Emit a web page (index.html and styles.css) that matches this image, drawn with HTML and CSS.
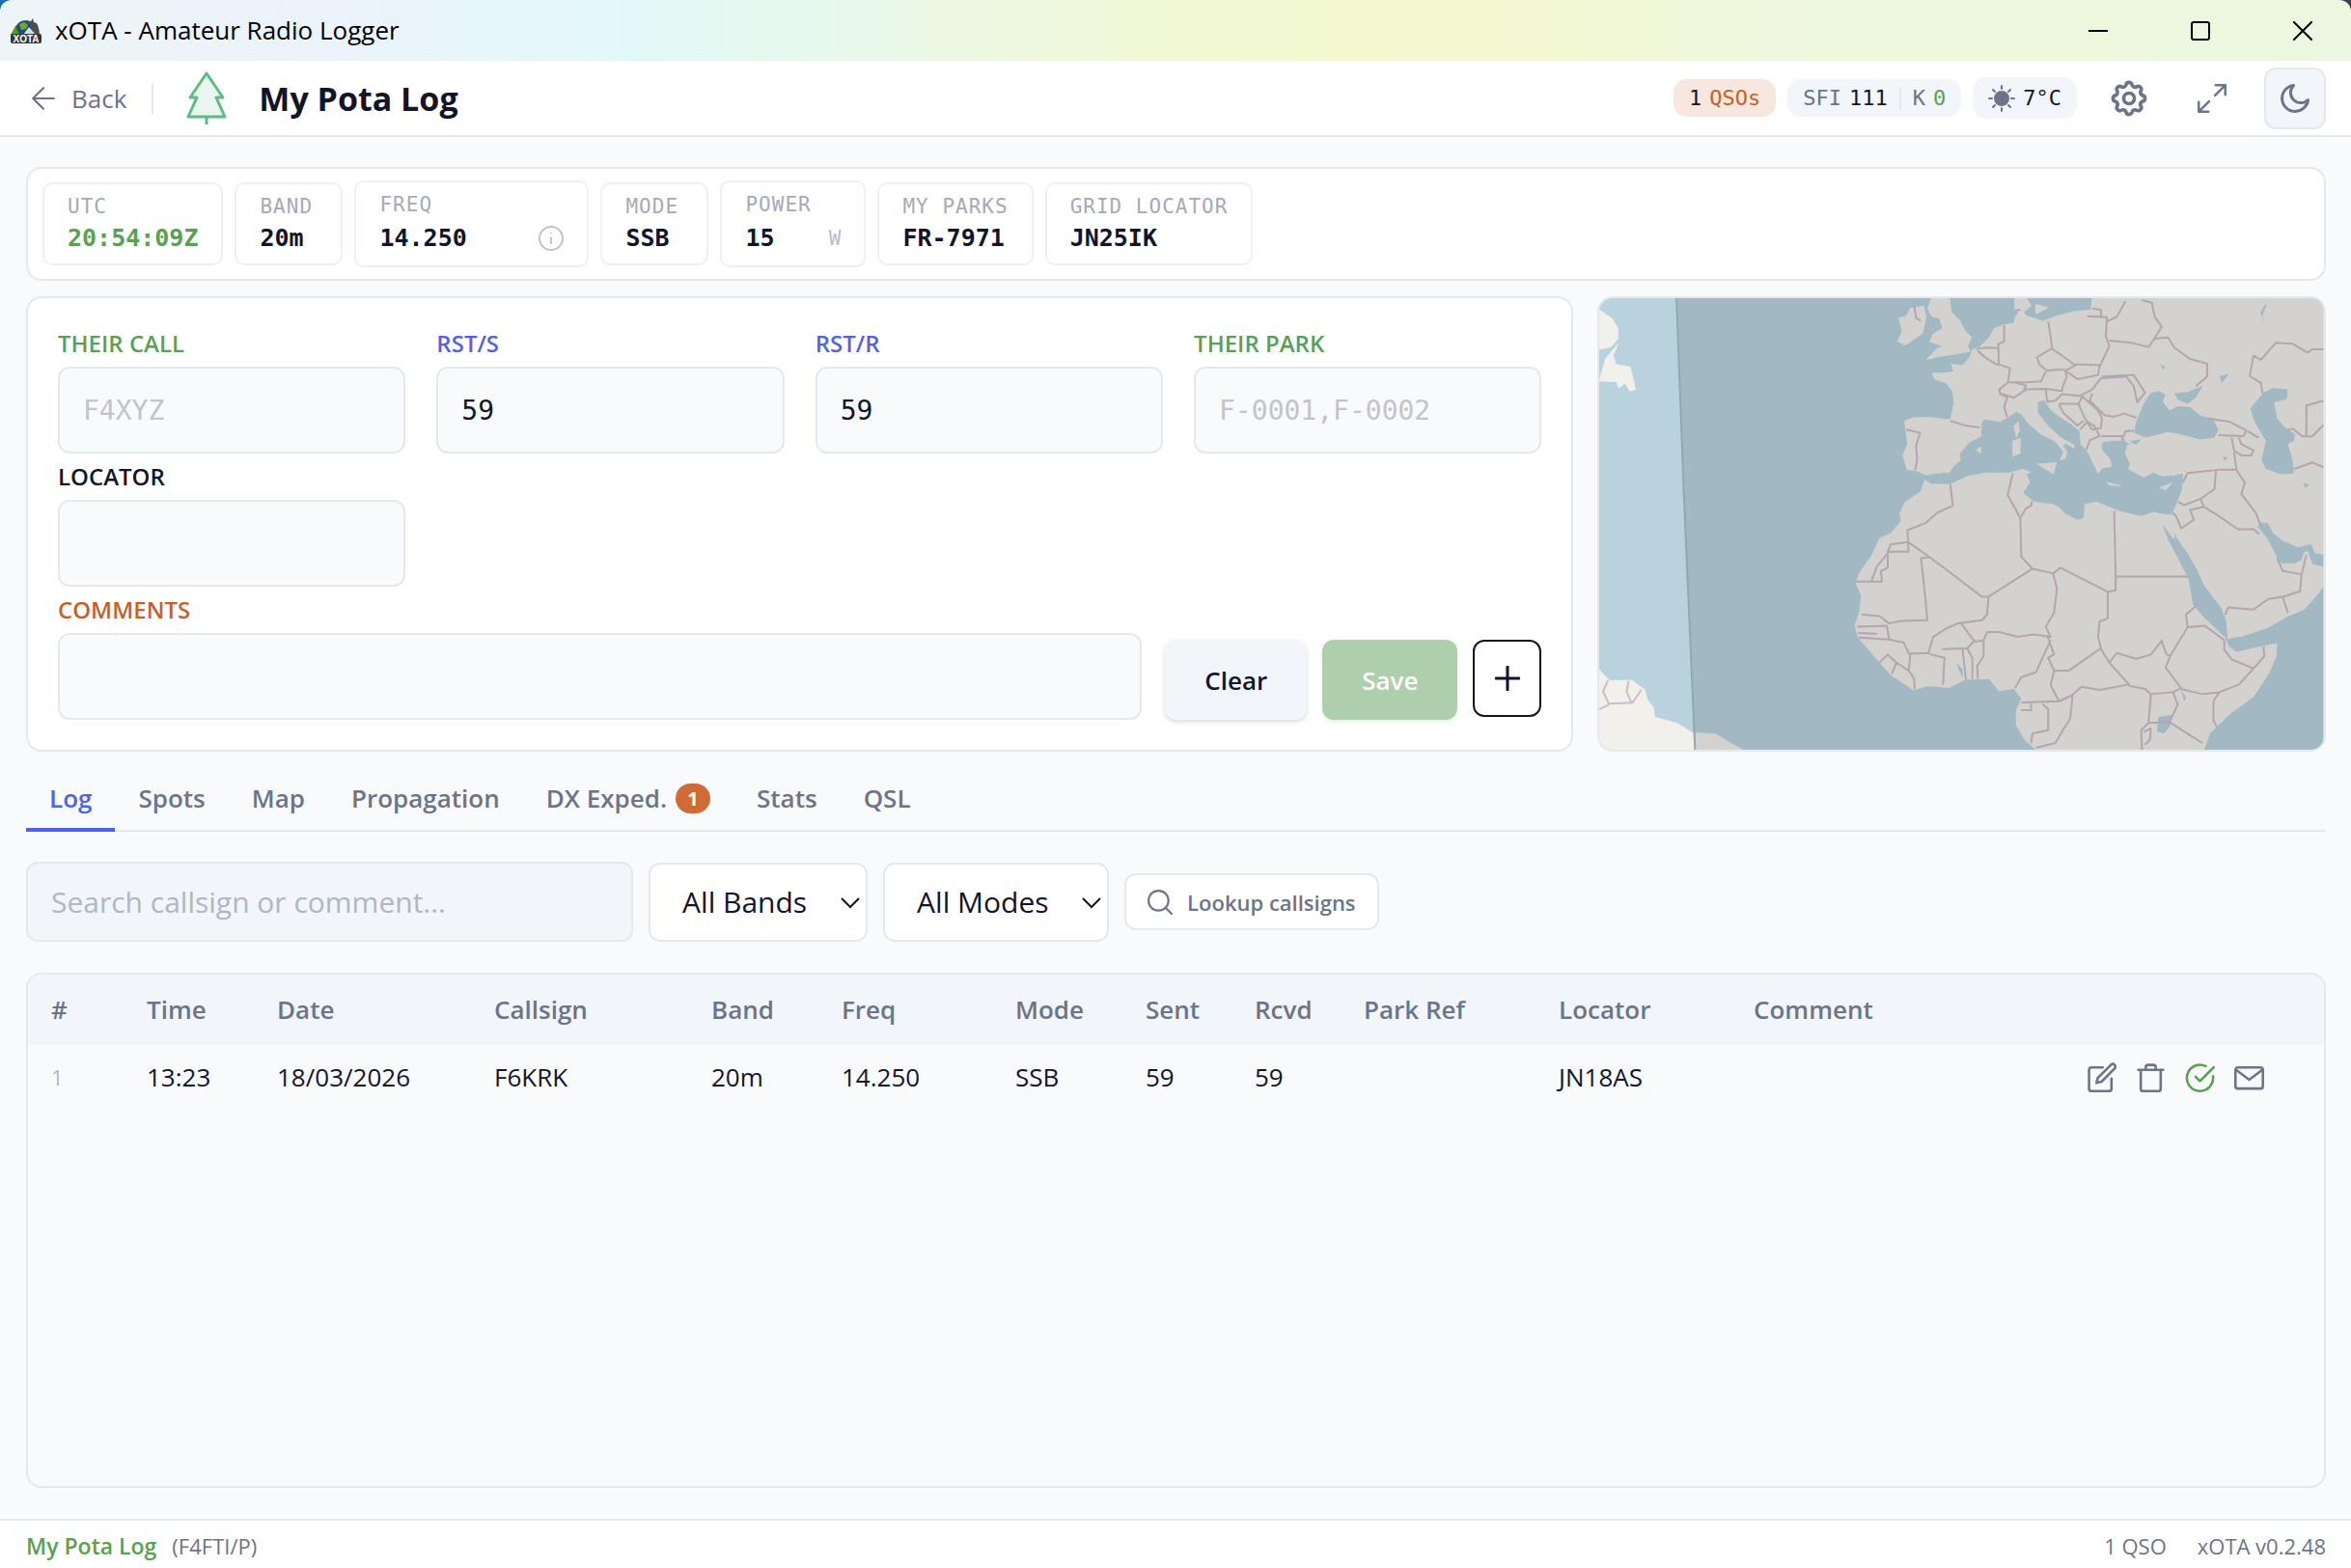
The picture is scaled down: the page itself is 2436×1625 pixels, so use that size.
FILE: index.html
```html
<!DOCTYPE html>
<html lang="en">
<head>
    <meta charset="UTF-8">
    <meta name="viewport" content="width=device-width, initial-scale=1.0">
    <title>xOTA - Amateur Radio Logger</title>
    <link rel="stylesheet" href="styles.css">
</head>
<body>

    <div class="titlebar">
        <svg class="app-logo" viewBox="0 0 34 28">
            <path d="M4 18C4 9 10 3 17 3l5 1 2-3 1 4 3 1c2 4 3 8 3 13H4z" fill="#4b4f52"/>
            <circle cx="15" cy="11" r="7" fill="#1d4f7c"/>
            <path d="M10 7l5-2 4 3-2 4-5 1z" fill="#6fa832"/>
            <path d="M1 18l5-9 4 9z" fill="#4f9a1f"/>
            <path d="M14 18l6-8 7 8z" fill="#d8dcdc"/>
            <rect x="1" y="17" width="32" height="10" rx="2" fill="#33373a"/>
            <text class="logo-text" x="17" y="26" text-anchor="middle">XOTA</text>
        </svg>
        <span class="window-title">xOTA - Amateur Radio Logger</span>
        <div class="window-controls">
            <button type="button" aria-label="Minimize"><svg viewBox="0 0 20 20"><path d="M0 10h20"/></svg></button>
            <button type="button" aria-label="Maximize"><svg viewBox="0 0 20 20"><rect x="1" y="1" width="18" height="18" rx="2"/></svg></button>
            <button type="button" aria-label="Close"><svg viewBox="0 0 20 20"><path d="M0 0l20 20M20 0L0 20"/></svg></button>
        </div>
    </div>

    <header class="header">
        <a class="back" href="#">
            <svg class="icon" viewBox="0 0 24 24"><path d="M22 12H2M12 2L2 12l10 10"/></svg>
            Back
        </a>
        <span class="divider"></span>
        <svg class="tree" viewBox="0 0 42 56"><path d="M21 2L4 27h7L2 47h38L31 27h7z"/><path d="M21 47v8"/></svg>
        <h1>My Pota Log</h1>
        <div class="header-right">
            <div class="pill pill-qso"><b>1</b> <span>QSOs</span></div>
            <div class="pill">
                <span>SFI</span> <b>111</b>
                <i class="pill-sep"></i>
                <span>K</span> <b class="green">0</b>
            </div>
            <div class="pill pill-weather">
                <svg class="sun" viewBox="0 0 28 28">
                    <circle cx="14" cy="14" r="7"/>
                    <path d="M14 1v3M14 24v3M1 14h3M24 14h3M5 5l2 2M21 21l2 2M5 23l2-2M21 7l2-2"/>
                </svg>
                <b>7°C</b>
            </div>
            <button type="button" class="icon-btn" aria-label="Settings">
                <svg class="icon icon-lg" viewBox="0 0 24 24"><circle cx="12" cy="12" r="3"/><path d="M10.3 4.3c.4-1.8 2.9-1.8 3.4 0a1.7 1.7 0 0 0 2.6 1.1c1.5-1 3.3.8 2.4 2.4a1.7 1.7 0 0 0 1 2.5c1.8.5 1.8 2.9 0 3.4a1.7 1.7 0 0 0-1 2.6c.9 1.5-.9 3.3-2.4 2.4a1.7 1.7 0 0 0-2.6 1c-.5 1.8-3 1.8-3.4 0a1.7 1.7 0 0 0-2.6-1c-1.5.9-3.3-.9-2.4-2.4a1.7 1.7 0 0 0-1-2.6c-1.8-.5-1.8-2.9 0-3.4a1.7 1.7 0 0 0 1-2.5c-.9-1.6.9-3.4 2.4-2.4 1 .6 2.3 0 2.6-1.1z"/></svg>
            </button>
            <button type="button" class="icon-btn" aria-label="Full screen">
                <svg class="icon icon-md" viewBox="0 0 24 24"><path d="M15 1h8v8M22.5 1.5l-8 8M9 23H1v-8M1.5 22.5l8-8"/></svg>
            </button>
            <button type="button" class="icon-btn theme-btn" aria-label="Dark mode">
                <svg class="icon" viewBox="0 0 24 24"><path d="M21 13A9 9 0 1 1 11 3a7 7 0 0 0 10 10z"/></svg>
            </button>
        </div>
    </header>

    <main>
        <section class="card status">
            <div class="stat"><span class="stat-label">UTC</span><span class="stat-value green">20:54:09Z</span></div>
            <div class="stat"><span class="stat-label">BAND</span><span class="stat-value">20m</span></div>
            <div class="stat stat-freq">
                <label class="stat-label" for="freq">FREQ</label>
                <div class="stat-row">
                    <input class="stat-value" type="text" id="freq" value="14.250">
                    <svg class="info" viewBox="0 0 26 26"><circle cx="13" cy="13" r="12"/><path d="M13 12v7M13 7v1"/></svg>
                </div>
            </div>
            <div class="stat"><span class="stat-label">MODE</span><span class="stat-value">SSB</span></div>
            <div class="stat stat-power">
                <label class="stat-label" for="power">POWER</label>
                <div class="stat-row">
                    <input class="stat-value" type="text" id="power" value="15">
                    <span class="unit">W</span>
                </div>
            </div>
            <div class="stat"><span class="stat-label">MY PARKS</span><span class="stat-value">FR-7971</span></div>
            <div class="stat"><span class="stat-label">GRID LOCATOR</span><span class="stat-value">JN25IK</span></div>
        </section>

        <div class="entry">
            <form class="card qso-form">
                <div class="field">
                    <label class="green" for="call">THEIR CALL</label>
                    <input type="text" id="call" placeholder="F4XYZ">
                </div>
                <div class="field">
                    <label class="blue" for="rsts">RST/S</label>
                    <input type="text" id="rsts" value="59">
                </div>
                <div class="field">
                    <label class="blue" for="rstr">RST/R</label>
                    <input type="text" id="rstr" value="59">
                </div>
                <div class="field">
                    <label class="green" for="park">THEIR PARK</label>
                    <input type="text" id="park" placeholder="F-0001,F-0002">
                </div>
                <div class="field">
                    <label for="locator">LOCATOR</label>
                    <input type="text" id="locator">
                </div>
                <div class="comment-row">
                    <div class="field">
                        <label class="orange" for="comments">COMMENTS</label>
                        <input type="text" id="comments">
                    </div>
                    <div class="form-buttons">
                        <button type="reset" class="btn btn-clear">Clear</button>
                        <button type="submit" class="btn btn-save">Save</button>
                        <button type="button" class="btn-plus" aria-label="Add"><svg viewBox="0 0 26 26"><path d="M13 1v24M1 13h24"/></svg></button>
                    </div>
                </div>
            </form>

            <div class="card map">
                <svg viewBox="32 56 1481 1405" preserveAspectRatio="none" role="img" aria-label="Map">
                    <rect class="sea" x="32" y="56" width="1481" height="1405"/>
                    <g class="land">
                        <path d="M882 56L882 90 890 102 884 112 880 135 862 138 840 150 830 178 812 207 795 217 790 240 775 266 752 260 757 286 735 288 713 290 718 308 742 320 755 345 758 380 751 432 735 432 710 427 675 428 657 438 659 465 663 510 653 545 662 590 680 592 700 606 715 602 748 597 755 580 770 560 768 540 788 505 812 485 812 450 818 432 850 440 868 425 885 408 897 418 908 443 935 478 965 502 982 533 975 560 986 552 988 533 979 515 986 508 1003 522 1002 512 975 490 950 455 928 412 928 380 942 370 955 402 975 425 1000 450 1015 470 1017 510 1030 530 1042 568 1052 600 1060 585 1080 580 1075 555 1060 530 1058 505 1082 498 1105 497 1115 508 1140 500 1150 490 1140 500 1112 515 1108 540 1118 570 1115 588 1145 612 1165 598 1185 610 1210 606 1227 600 1225 650 1212 700 1204 728 1190 730 1165 722 1140 735 1110 725 1088 714 1068 702 1048 690 1025 698 1024 738 1012 748 985 728 972 708 960 698 920 690 898 662 912 628 905 605 914 597 897 588 870 600 820 600 785 610 750 636 710 634 698 622 690 658 658 690 647 725 650 750 628 788 606 803 588 860 565 910 557 942 568 980 565 1030 555 1075 562 1112 585 1152 605 1188 630 1230 675 1275 705 1262 747 1268 780 1242 830 1240 850 1278 880 1270 896 1302 885 1340 885 1385 903 1430 925 1461 1268 1461 1280 1410 1320 1350 1370 1295 1400 1225 1416 1170 1417 1130 1370 1145 1335 1158 1320 1142 1310 1110 1285 1075 1268 1050 1245 1010 1236 930 1216 870 1195 810 1180 752 1207 804 1210 775 1213 800 1236 850 1255 900 1270 950 1305 1020 1315 1060 1318 1114 1345 1108 1400 1080 1440 1045 1472 1025 1502 975 1513 950 1513 892 1490 885 1480 845 1475 845 1468 872 1455 882 1428 882 1418 868 1410 840 1395 800 1378 768 1380 752 1400 755 1410 785 1430 810 1460 830 1488 820 1497 850 1513 852 1513 56 1040 56 1038 92 1000 98 960 115 940 128 920 118 905 112 900 98 915 80 905 56z"/>
                        <path d="M668 88L695 80 700 115 693 165 658 202 642 190 652 160 645 118 660 112z"/>
                        <path d="M712 56L748 56 752 100 770 128 780 158 793 178 785 205 790 222 760 230 725 238 702 247 722 214 735 205 708 192 715 168 735 150 728 118 712 112 704 88z"/>
                        <path d="M880 455L889 440 891 468 885 488zM878 500L893 492 892 540 878 547zM928 572L967 567 960 602zM1070 628L1100 640 1075 638zM1178 645L1202 632 1190 652zM803 528L812 520 812 538zM925 75L950 85 925 105z"/>
                        <path d="M32 92L58 120 70 150 70 182 55 208 32 215z"/>
                        <path d="M70 200L60 235 66 262 95 270 100 300 106 340 95 345 85 320 72 335 68 316 32 315 45 245z"/>
                        <path d="M32 1212L52 1245 98 1245 125 1275 130 1305 143 1330 145 1360 190 1378 222 1408 270 1412 300 1440 325 1461 32 1461z"/>
                    </g>
                    <g class="sea">
                        <path d="M1160 350L1178 345 1190 358 1184 378 1198 405 1215 392 1240 395 1260 420 1288 435 1298 465 1290 490 1260 496 1228 482 1195 472 1150 490 1125 475 1130 440 1145 385z"/>
                        <path d="M1208 352L1235 348 1267 328 1252 365 1235 385 1215 372z"/>
                        <path d="M1390 350L1410 335 1440 340 1438 370 1412 380 1418 430 1435 460 1455 480 1452 500 1440 510 1450 560 1452 602 1425 604 1395 587 1386 560 1395 500 1372 440 1363 400z"/>
                        <path d="M1115 500L1140 496 1130 512zM1175 1360L1203 1352 1200 1385 1188 1410 1172 1405zM1300 300L1320 290 1305 320zM1384 100L1392 80 1398 72 1388 110 1393 140zM1180 262L1190 270 1184 278z"/>
                        <path d="M1472 630L1485 638 1475 645zM1306 550L1318 550 1312 562zM1222 1275L1232 1300 1228 1310zM762 1190L775 1210 776 1240 768 1215z"/>
                    </g>
                    <g class="borders">
                        <path d="M882 95L893 92M676 80L680 118 690 126M860 140L860 190 848 200 849 262 872 274 868 318 850 340 852 355 866 365 860 395 866 425M803 214L825 210 848 212M806 220L825 245 848 264M950 128L955 175 958 212 927 240 932 262 948 282 968 278 988 280 1005 265 983 240 958 214M868 318L905 318 935 315 945 285M852 352L880 366 905 340 945 338 978 345 980 330 988 300 985 283M880 318L905 328 900 340M945 338L948 378 965 375 978 355 1015 360 1040 340 1058 305 1110 300 1125 330 1132 380 1148 350 1125 295 1060 300M988 285L1010 308 1052 295 1055 265 1005 262M1055 270L1075 205 1068 175 1070 115 1030 112M1040 88L1058 92 1058 112M1070 128L1090 115 1108 66M1142 62L1162 70 1168 115 1182 145 1168 180 1155 208 1120 195 1075 188M1168 182L1195 178 1208 210 1240 245 1275 260 1275 300 1252 330M972 385L1012 385 1020 362 1052 405 1060 430 1058 460 1040 465 1025 430 1012 385M972 388L982 415 1010 452 1022 438M1015 465L1030 440 1045 455 1055 485 1035 498 1028 528M1058 485L1105 485 1108 470 1125 468M1040 352L1035 375 1065 420 1085 425 1105 415 1130 428M1100 488L1105 500M750 438L780 452 810 458M660 465L688 475 680 515 682 560 678 590"/>
                        <path d="M1275 430L1320 440 1355 468 1350 485 1298 482M1358 470L1380 490M1325 490L1330 530 1345 545 1365 545 1370 530 1345 510 1340 490M1330 535L1335 590 1300 590 1235 600 1225 630M1335 590L1352 630 1345 665 1375 725 1382 755M1293 595L1290 650 1262 680 1228 700 1215 690M1262 682L1268 705 1240 715 1248 745 1222 772 1212 735 1205 725M1268 705L1300 735 1338 775 1370 775 1382 790M1388 352L1385 320 1362 298 1370 235 1385 248 1415 195 1450 198 1480 225 1490 215 1513 215M1478 486L1478 390 1513 375M1435 468L1450 462 1470 486 1490 486 1513 450M1452 588L1490 567 1513 582M1418 865L1430 905 1468 915 1478 855M1468 915L1465 968 1430 985 1400 992 1370 1025 1318 1018 1312 1042M1430 988L1440 1035"/>
                        <path d="M750 636L755 702 725 722 700 755 662 778 664 815 628 822 622 845 664 845 664 815M622 845L622 895 608 905 610 938 557 938M622 850L600 890 588 938M664 815L708 862 815 985 828 985 918 898 895 860 893 740 867 668 878 600M893 740L905 710 916 700 916 688M918 898L960 912 975 895 1072 970 1088 965 1088 922 1236 922M1088 922L1085 718M708 862L690 865 698 975 703 1058 650 1060 625 1068 605 1045 568 1040M828 985L825 1040 815 1058 765 1068 740 1085 715 1110 705 1160 665 1162 655 1128 625 1118 620 1075 560 1078M960 912L968 960 962 1035 945 1078 955 1110 920 1102 888 1110 850 1095 825 1095 818 1120 800 1125 772 1068M1072 970L1072 1052 1055 1062 1052 1110 1058 1145 1020 1185 992 1215 962 1215 950 1175 962 1165 948 1105M562 1098L600 1100M562 1112L625 1118M605 1190L622 1165 640 1190 665 1215 668 1165M640 1190L630 1225M665 1215L676 1240 677 1272M705 1162L738 1175 735 1260M733 1148L785 1145 800 1120M775 1148L782 1245M785 1148L795 1175 795 1240M818 1122L818 1170 805 1200 806 1240M955 1120L925 1220 895 1235 882 1270M962 1215L955 1260 972 1310 895 1314M1058 1148L1075 1190 1115 1258 1055 1275 1018 1265 1000 1290 975 1310M972 1310L1000 1290 995 1365 980 1400 965 1440 925 1455M895 1338L915 1338 915 1318M938 1318L950 1335 950 1400 918 1410 915 1440M1075 1190L1090 1160 1130 1178 1160 1165 1182 1122 1192 1165 1200 1168 1190 1205 1222 1270 1205 1282 1160 1288 1148 1272 1115 1262M1200 1168L1235 1080 1232 1040 1255 1010M1235 1080L1270 1075 1310 1120 1310 1150 1325 1180 1370 1208 1392 1170 1390 1140M1370 1208L1340 1258 1300 1282 1265 1288 1222 1272M1300 1282L1288 1310 1288 1370 1295 1390M1205 1282L1215 1320 1198 1375 1265 1440M1200 1375L1155 1378 1160 1288M1155 1378L1140 1400 1142 1461M1145 1405L1160 1395 1158 1430 1148 1445M50 1245L40 1280 52 1318 100 1315 118 1275M92 1248L88 1280 98 1315M32 1335L52 1320"/>
                    </g>
                    <path class="night" d="M190 56L205 660 228 1461H1513V56z"/>
                    <path class="terminator" d="M190 56L205 660 228 1461"/>
                </svg>
            </div>
        </div>

        <nav class="tabs">
            <a class="tab active" href="#">Log</a>
            <a class="tab" href="#">Spots</a>
            <a class="tab" href="#">Map</a>
            <a class="tab" href="#">Propagation</a>
            <a class="tab" href="#">DX Exped. <span class="badge">1</span></a>
            <a class="tab" href="#">Stats</a>
            <a class="tab" href="#">QSL</a>
        </nav>

        <div class="filters">
            <input class="search" type="text" aria-label="Search" placeholder="Search callsign or comment...">
            <div class="select">
                <select aria-label="Band"><option>All Bands</option></select>
                <svg viewBox="0 0 20 12"><path d="M1 1l9 9 9-9"/></svg>
            </div>
            <div class="select">
                <select aria-label="Mode"><option>All Modes</option></select>
                <svg viewBox="0 0 20 12"><path d="M1 1l9 9 9-9"/></svg>
            </div>
            <button type="button" class="lookup">
                <svg class="icon" viewBox="0 0 24 24"><circle cx="10.5" cy="10.5" r="9.5"/><path d="M17.5 17.5L23 23"/></svg>
                Lookup callsigns
            </button>
        </div>

        <section class="log">
            <table>
                <colgroup>
                    <col class="w-num"><col class="w-sm"><col class="w-lg"><col class="w-lg"><col class="w-sm"><col class="w-freq">
                    <col class="w-sm"><col class="w-rst"><col class="w-rst"><col class="w-md"><col class="w-md"><col><col class="w-actions">
                </colgroup>
                <thead>
                    <tr>
                        <th>#</th><th>Time</th><th>Date</th><th>Callsign</th><th>Band</th><th>Freq</th><th>Mode</th>
                        <th>Sent</th><th>Rcvd</th><th>Park Ref</th><th>Locator</th><th>Comment</th><th></th>
                    </tr>
                </thead>
                <tbody>
                    <tr>
                        <td class="num">1</td><td>13:23</td><td>18/03/2026</td><td>F6KRK</td><td>20m</td><td>14.250</td><td>SSB</td>
                        <td>59</td><td>59</td><td></td><td>JN18AS</td><td></td>
                        <td>
                            <div class="actions">
                                <button type="button" aria-label="Edit"><svg class="icon" viewBox="0 0 24 24"><path d="M13 4H4a2 2 0 0 0-2 2v15a2 2 0 0 0 2 2h14a2 2 0 0 0 2-2v-8"/><path d="M19.5 2a2.1 2.1 0 0 1 3 3L12 15.5l-4 1 1-4z"/></svg></button>
                                <button type="button" aria-label="Delete"><svg class="icon" viewBox="0 0 24 24"><path d="M2 6h20M4 6v15a2 2 0 0 0 2 2h12a2 2 0 0 0 2-2V6M8 6V4a2 2 0 0 1 2-2h4a2 2 0 0 1 2 2v2"/></svg></button>
                                <button type="button" class="green" aria-label="Confirmed"><svg class="icon" viewBox="0 0 24 24"><path d="M22.5 11v1.5A10.5 10.5 0 1 1 16.5 3"/><path d="M23 4L12 15l-3.5-3.5"/></svg></button>
                                <button type="button" aria-label="Mail"><svg class="icon" viewBox="0 0 24 24"><rect x="1" y="4" width="22" height="17" rx="2"/><path d="M1.5 6L12 14l10.5-8"/></svg></button>
                            </div>
                        </td>
                    </tr>
                </tbody>
            </table>
        </section>
    </main>

    <footer class="footer">
        <strong>My Pota Log</strong>
        <span>(F4FTI/P)</span>
        <div class="footer-right">
            <span>1 QSO</span>
            <span>xOTA v0.2.48</span>
        </div>
    </footer>
</body>
</html>
```
FILE: styles.css
```css
* {
    box-sizing: border-box;
}
body {
    font-family: "Open Sans", "Noto Sans", sans-serif;
    font-size: 26px;
    margin: 0;
    min-height: 100vh;
    display: flex;
    flex-direction: column;
    background: linear-gradient(90deg, #1f6fa8, #3b4352);
    color: #12152a;
}
button, input, select {
    font-family: inherit;
    font-size: inherit;
    color: inherit;
    margin: 0;
}
button {
    cursor: pointer;
    padding: 0;
    border: none;
    background: none;
}
svg {
    display: block;
    flex: none;
}
.green {
    color: #5aa052;
}
.blue {
    color: #4f63e6;
}
.orange {
    color: #c95f28;
}
.icon {
    width: 26px;
    height: 26px;
    fill: none;
    stroke: currentColor;
    stroke-width: 2;
    stroke-linecap: round;
    stroke-linejoin: round;
}

/* window title bar */
.titlebar {
    display: flex;
    align-items: center;
    height: 63px;
    padding-left: 10px;
    border-radius: 12px 12px 0 0;
    background: linear-gradient(90deg, #eef5f7 0%, #ebf3fb 14%, #e2f8f8 27%, #e7f8ec 35%, #f2f8d5 50%, #f3f8cf 57%, #f3f8d3 66%, #eef7dd 75%, #ebf7e0 100%);
}
.app-logo {
    width: 34px;
    height: 28px;
}
.logo-text {
    font: bold 10px "Liberation Sans", sans-serif;
    fill: #fff;
}
.window-title {
    margin-left: 13px;
    font-size: 26px;
    line-height: 34px;
    padding-bottom: 2px;
    color: #000;
}
.window-controls {
    display: flex;
    gap: 6px;
    margin-left: auto;
}
.window-controls button {
    width: 100px;
    height: 60px;
    display: flex;
    align-items: center;
    justify-content: center;
}
.window-controls svg {
    width: 20px;
    height: 20px;
    fill: none;
    stroke: #000;
    stroke-width: 2;
}

/* header */
.header {
    display: flex;
    align-items: center;
    height: 79px;
    padding: 0 26px 0 32px;
    background: #fff;
    border-bottom: 2px solid #e4e8ef;
}
.back {
    display: flex;
    align-items: center;
    gap: 16px;
    color: #6b7489;
    text-decoration: none;
}
.divider {
    width: 2px;
    height: 32px;
    margin: 0 34px 0 26px;
    background: #e4e8ef;
}
.tree {
    width: 42px;
    height: 56px;
    fill: #e9f5ee;
    stroke: #5fba84;
    stroke-width: 3;
    stroke-linejoin: round;
}
h1 {
    margin: 0 0 0 33px;
    font-size: 34px;
    font-weight: 700;
}
.header-right {
    display: flex;
    align-items: center;
    gap: 12px;
    margin-left: auto;
}
.pill {
    display: flex;
    align-items: center;
    gap: 8px;
    height: 39px;
    padding: 0 16px;
    border-radius: 14px;
    background: #f2f5fa;
    font-family: "DejaVu Sans Mono", monospace;
    font-size: 22px;
    color: #6b7489;
}
.pill b {
    font-weight: 400;
    color: #12152a;
}
.pill b.green {
    color: #5aa052;
}
.pill-qso {
    background: #f7e7de;
    color: #c95f28;
}
.pill-sep {
    width: 2px;
    height: 24px;
    margin: 0 4px;
    background: #e4e8ef;
}
.pill-weather {
    height: 43px;
}
.sun {
    width: 28px;
    height: 28px;
    fill: #6b7489;
    stroke: #6b7489;
    stroke-width: 2;
    stroke-linecap: round;
}
.icon-btn {
    display: flex;
    align-items: center;
    justify-content: center;
    width: 64px;
    height: 64px;
    margin-left: 10px;
    color: #6b7489;
}
.icon-btn .icon {
    width: 36px;
    height: 36px;
}
.icon-btn .icon-lg {
    width: 44px;
    height: 44px;
}
.icon-btn .icon-md {
    width: 30px;
    height: 30px;
}
.theme-btn {
    border: 2px solid #e4e8ef;
    border-radius: 12px;
    background: #f2f5fa;
}

main {
    flex: 1;
    display: flex;
    flex-direction: column;
    padding: 31px 26px 32px 27px;
    background: #f9fafc;
}
.card {
    background: #fff;
    border: 2px solid #e4e8ef;
    border-radius: 16px;
}

/* station status */
.status {
    display: flex;
    align-items: center;
    gap: 12px;
    padding: 12px 15px;
    font-family: "DejaVu Sans Mono", monospace;
}
.stat {
    display: flex;
    flex-direction: column;
    min-width: 112px;
    padding: 9px 24px 7px;
    border: 2px solid #efeff6;
    border-radius: 10px;
}
.stat-label {
    font-size: 21px;
    line-height: 28px;
    letter-spacing: 1px;
    color: #a5aab6;
}
.stat-value {
    font-size: 25px;
    font-weight: 700;
    line-height: 38px;
}
.stat-row {
    display: flex;
    align-items: center;
    height: 42px;
}
.stat-row input {
    flex: 1;
    min-width: 0;
    padding: 0;
    border: none;
    background: none;
    font-family: inherit;
}
.stat-freq {
    width: 243px;
}
.stat-power {
    width: 151px;
}
.info {
    width: 26px;
    height: 26px;
    fill: none;
    stroke: #c0c4ce;
    stroke-width: 2;
}
.unit {
    font-size: 21px;
    color: #b9bec9;
}

/* QSO entry */
.entry {
    display: grid;
    grid-template-columns: 17fr 8fr;
    gap: 25px;
    margin-top: 16px;
}
.qso-form {
    display: grid;
    grid-template-columns: repeat(4, 1fr);
    gap: 8px 32px;
    padding: 31px;
}
.field {
    display: flex;
    flex-direction: column;
    gap: 8px;
    min-width: 0;
}
.field label {
    font-size: 24px;
    font-weight: 600;
    line-height: 32px;
}
.field input {
    width: 100%;
    height: 90px;
    padding: 0 24px;
    border: 2px solid #e4e8ef;
    border-radius: 12px;
    background: #f9fafc;
    font-family: "DejaVu Sans Mono", monospace;
    font-size: 28px;
}
.field input::placeholder {
    color: #c0c4ce;
    opacity: 1;
}
.comment-row {
    grid-column: 1 / -1;
    display: flex;
    align-items: flex-end;
    gap: 24px;
}
.comment-row .field {
    flex: 1;
}
.form-buttons {
    display: flex;
    align-items: flex-start;
    gap: 16px;
}
.btn {
    height: 83px;
    padding: 0 41px;
    border-radius: 12px;
    font-weight: 600;
    box-shadow: 0 2px 5px rgba(0, 0, 0, 0.15);
}
.btn-clear {
    background: #f2f5fa;
}
.btn-save {
    background: #aecfab;
    color: #fff;
    box-shadow: 0 2px 5px rgba(0, 0, 0, 0.08);
}
.btn-plus {
    display: flex;
    align-items: center;
    justify-content: center;
    width: 71px;
    height: 80px;
    border: 2px solid #12152a;
    border-radius: 12px;
}
.btn-plus svg {
    width: 26px;
    height: 26px;
    stroke: #12152a;
    stroke-width: 3;
    stroke-linecap: round;
}

/* map takes the height of the form beside it */
.map {
    contain: size;
    overflow: hidden;
}
.map svg {
    width: 100%;
    height: 100%;
}
.sea {
    fill: #b9d3de;
}
.land {
    fill: #f1f0eb;
    stroke: #f1f0eb;
    stroke-width: 2;
    stroke-linejoin: round;
}
.borders {
    fill: none;
}
.borders path {
    stroke: #cdbcc8;
    stroke-width: 2;
    stroke-linejoin: round;
    vector-effect: non-scaling-stroke;
}
.night {
    fill: rgba(0, 0, 0, 0.12);
}
.terminator {
    fill: none;
    stroke: #93a7b1;
    stroke-width: 2;
    vector-effect: non-scaling-stroke;
}

/* tabs */
.tabs {
    display: flex;
    margin-top: 15px;
    box-shadow: inset 0 -2px #e4e8ef;
}
.tab {
    display: flex;
    align-items: center;
    gap: 9px;
    padding: 15px 24px 13px;
    border-bottom: 4px solid transparent;
    color: #6b7489;
    font-weight: 600;
    line-height: 36px;
    text-decoration: none;
}
.tab.active {
    color: #4f63e6;
    border-bottom-color: #4f63e6;
}
.badge {
    min-width: 36px;
    border-radius: 16px;
    background: #d06b37;
    color: #fff;
    font-size: 20px;
    font-weight: 700;
    line-height: 31px;
    text-align: center;
}

/* filters */
.filters {
    display: flex;
    align-items: center;
    gap: 16px;
    margin: 31px 0 32px;
}
.search {
    width: 26.4%;
    height: 83px;
    padding: 0 24px;
    border: 2px solid #e4e8ef;
    border-radius: 12px;
    background: #f2f5fa;
    font-size: 30px;
}
.search::placeholder {
    color: #b0b6c3;
    opacity: 1;
}
.select {
    position: relative;
}
.select select {
    appearance: none;
    height: 82px;
    padding: 0 60px 0 33px;
    border: 2px solid #e4e8ef;
    border-radius: 12px;
    background: #fff;
    font-size: 30px;
}
.select svg {
    position: absolute;
    top: 36px;
    right: 8px;
    width: 20px;
    height: 12px;
    fill: none;
    stroke: #12152a;
    stroke-width: 2;
    pointer-events: none;
}
.lookup {
    display: flex;
    align-items: center;
    gap: 15px;
    height: 59px;
    padding: 0 22px;
    border: 2px solid #e4e8ef;
    border-radius: 12px;
    background: #fff;
    color: #6b7489;
    font-size: 22px;
    font-weight: 600;
}

/* log table */
.log {
    flex: 1;
    border: 2px solid #e4e8ef;
    border-radius: 16px;
    overflow: hidden;
}
.log table {
    width: 100%;
    table-layout: fixed;
    border-collapse: collapse;
}
.log th, .log td {
    padding: 0 24px;
    text-align: left;
    font-weight: 400;
    white-space: nowrap;
}
.log th {
    height: 73px;
    padding-bottom: 2px;
    background: #f2f5fa;
    color: #6b7489;
    font-weight: 600;
}
.log td {
    height: 66px;
}
.log .num {
    color: #b0b6c3;
    font-size: 22px;
}
.w-num {
    width: 99px;
}
.w-sm {
    width: 135px;
}
.w-rst {
    width: 113px;
}
.w-freq {
    width: 180px;
}
.w-md {
    width: 202px;
}
.w-lg {
    width: 225px;
}
.w-actions {
    width: 270px;
}
.actions {
    display: flex;
    gap: 20px;
    color: #6b7489;
}
.actions .icon {
    width: 31px;
    height: 31px;
}

/* footer */
.footer {
    display: flex;
    gap: 16px;
    padding: 13px 26px 10px 27px;
    border-top: 2px solid #e4e8ef;
    background: #fff;
    color: #6b7489;
    font-size: 22px;
    line-height: 26px;
}
.footer strong {
    color: #5aa052;
    font-size: 23px;
    font-weight: 600;
}
.footer-right {
    display: flex;
    gap: 32px;
    margin-left: auto;
}
```
